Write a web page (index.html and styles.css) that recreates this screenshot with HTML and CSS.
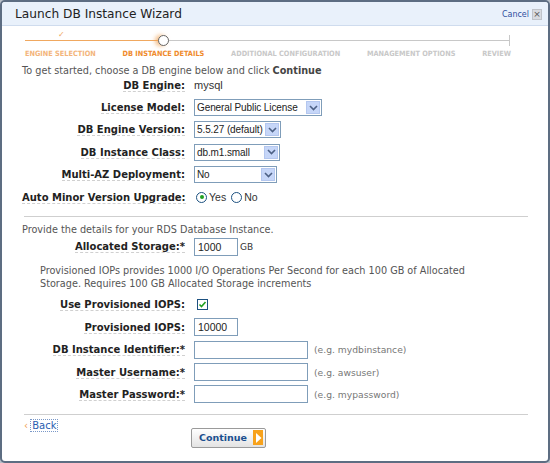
FILE: index.html
```html
<!DOCTYPE html>
<html>
<head>
<meta charset="utf-8">
<link rel="stylesheet" href="styles.css">
</head>
<body>
<div class="dialog">
  <div class="titlebar">
    <span class="title">Launch DB Instance Wizard</span>
    <span class="cancel">Cancel <span class="xbox">×</span></span>
  </div>
  <div class="progress">
    <div class="track">
      <span class="done"></span>
      <span class="todo"></span>
      <span class="tick"></span>
      <span class="check">✓</span>
      <span class="circle"></span>
    </div>
    <div class="steps">
      <span class="step past">ENGINE SELECTION</span>
      <span class="step current">DB INSTANCE DETAILS</span>
      <span class="step">ADDITIONAL CONFIGURATION</span>
      <span class="step">MANAGEMENT OPTIONS</span>
      <span class="step">REVIEW</span>
    </div>
  </div>
  <div class="content">
    <p class="intro">To get started, choose a DB engine below and click <b>Continue</b></p>
    <div class="form">
      <div class="row"><span class="label"><span>DB Engine:</span></span><span class="value">mysql</span></div>
      <div class="row"><span class="label"><span>License Model:</span></span><span class="select w128"><span class="val">General Public License</span><span class="arrow"><svg width="9" height="6" viewBox="0 0 9 6"><path d="M1 1 L4.5 4.5 L8 1" fill="none" stroke="#4d6185" stroke-width="1.6"/></svg></span></span></div>
      <div class="row"><span class="label"><span>DB Engine Version:</span></span><span class="select w87"><span class="val">5.5.27 (default)</span><span class="arrow"><svg width="9" height="6" viewBox="0 0 9 6"><path d="M1 1 L4.5 4.5 L8 1" fill="none" stroke="#4d6185" stroke-width="1.6"/></svg></span></span></div>
      <div class="row"><span class="label"><span>DB Instance Class:</span></span><span class="select w86"><span class="val">db.m1.small</span><span class="arrow"><svg width="9" height="6" viewBox="0 0 9 6"><path d="M1 1 L4.5 4.5 L8 1" fill="none" stroke="#4d6185" stroke-width="1.6"/></svg></span></span></div>
      <div class="row"><span class="label"><span>Multi-AZ Deployment:</span></span><span class="select w83"><span class="val">No</span><span class="arrow"><svg width="9" height="6" viewBox="0 0 9 6"><path d="M1 1 L4.5 4.5 L8 1" fill="none" stroke="#4d6185" stroke-width="1.6"/></svg></span></span></div>
      <div class="row"><span class="label"><span>Auto Minor Version Upgrade:</span></span><span class="value radios"><span class="radio on"></span><span class="rtext">Yes</span><span class="radio"></span><span class="rtext">No</span></span></div>
    </div>
    <hr class="sep">
    <p class="intro2">Provide the details for your RDS Database Instance.</p>
    <div class="form">
      <div class="row"><span class="label"><span>Allocated Storage:*</span></span><span class="value"><input class="input w44" value="1000"><span class="unit">GB</span></span></div>
    </div>
    <p class="note">Provisioned IOPs provides 1000 I/O Operations Per Second for each 100 GB of Allocated Storage. Requires 100 GB Allocated Storage increments</p>
    <div class="form">
      <div class="row"><span class="label"><span>Use Provisioned IOPS:</span></span><span class="value"><span class="checkbox"><svg width="9" height="9" viewBox="0 0 9 9"><path d="M1.5 4.5 L3.5 6.5 L7.5 2" fill="none" stroke="#21a121" stroke-width="1.6"/></svg></span></span></div>
      <div class="row"><span class="label"><span>Provisioned IOPS:</span></span><span class="value"><input class="input w44" value="10000"></span></div>
      <div class="row"><span class="label"><span>DB Instance Identifier:*</span></span><span class="value"><input class="input w114"><span class="hint">(e.g. mydbinstance)</span></span></div>
      <div class="row"><span class="label"><span>Master Username:*</span></span><span class="value"><input class="input w114"><span class="hint">(e.g. awsuser)</span></span></div>
      <div class="row"><span class="label"><span>Master Password:*</span></span><span class="value"><input class="input w114"><span class="hint">(e.g. mypassword)</span></span></div>
    </div>
    <hr class="sep sep2">
    <div class="back"><span class="lt">‹</span> <a class="backlink">Back</a></div>
    <div class="actions">
      <button class="continue">Continue <span class="go"><svg width="7" height="10" viewBox="0 0 7 10"><path d="M1 0 L6.5 5 L1 10 Z" fill="#fff"/></svg></span></button>
    </div>
  </div>
</div>
</body>
</html>
```
FILE: styles.css
```css
* { box-sizing: border-box; }
html, body { margin: 0; padding: 0; }
body {
  width: 550px;
  height: 463px;
  background: #b9c0c9;
  font-family: "DejaVu Sans", Verdana, sans-serif;
  font-size: 9.7px;
  color: #333;
}
.dialog {
  width: 550px;
  height: 463px;
  border: 2px solid #5d6d82;
  border-radius: 5px;
  background: #fff;
  overflow: hidden;
}
.titlebar {
  height: 24px;
  background: #e9f1fb;
  border-bottom: 1px solid #cfdcee;
  display: flex;
  align-items: center;
  justify-content: space-between;
  padding: 1px 6px 0 13px;
}
.title {
  font-size: 12.2px;
  color: #222;
}
.cancel {
  font-size: 8px;
  color: #2f4f9f;
  display: flex;
  align-items: center;
  gap: 3px;
}
.xbox {
  display: inline-flex;
  align-items: center;
  justify-content: center;
  width: 10px;
  height: 11px;
  background: #d8dbe0;
  border: 1px solid #c0c4ca;
  color: #555;
  font-size: 9px;
  line-height: 1;
}
.progress {
  padding: 2px 0 0 23px;
  height: 38px;
}
.track {
  position: relative;
  height: 20px;
  width: 486px;
}
.done {
  position: absolute;
  left: 0; top: 12px;
  width: 135px; height: 1px;
  background: #f0a860;
}
.todo {
  position: absolute;
  left: 135px; top: 12px;
  width: 350px; height: 1px;
  background: #c8c8c8;
}
.tick {
  position: absolute;
  left: 484px; top: 7px;
  width: 1px; height: 11px;
  background: #c8c8c8;
}
.check {
  position: absolute;
  left: 33px; top: 2px;
  font-size: 8px;
  color: #f0a860;
  font-weight: bold;
}
.circle {
  position: absolute;
  left: 133px; top: 7px;
  width: 11px; height: 11px;
  border-radius: 50%;
  background: #fff;
  border: 1.5px solid #666;
  box-shadow: -3px 0 4px rgba(240,160,80,0.7);
}
.steps {
  display: flex;
  justify-content: space-between;
  width: 486px;
  font-family: "DejaVu Sans Condensed", "DejaVu Sans", sans-serif;
  font-size: 7.3px;
  font-weight: bold;
  color: #c8c8c8;
  margin-top: 1px;
}
.step.past { color: #f3b47a; }
.step.current { color: #ef8a2c; }
.content {
  padding: 0 20px 0 20px;
}
.intro, .intro2 {
  margin: 0;
  color: #555;
  line-height: 13px;
}
.intro { margin-bottom: -3px; }
.intro2 { margin-bottom: -1px; }
.intro b { color: #444; }
.form {
  display: flex;
  flex-direction: column;
}
.row {
  display: grid;
  grid-template-columns: 163px 1fr;
  column-gap: 9px;
  align-items: center;
  height: 22.4px;
}
.label {
  text-align: right;
  font-weight: bold;
  font-size: 10px;
  color: #222;
  white-space: nowrap;
}
.label span {
  border-bottom: 1px dashed #d0d0d0;
}
.value {
  display: flex;
  align-items: center;
  color: #333;
  font-family: "Liberation Sans", Arial, sans-serif;
  font-size: 11px;
}
.select {
  display: flex;
  align-items: center;
  height: 17px;
  border: 1px solid #7f9db9;
  background: #fff;
  font-family: "Liberation Sans", Arial, sans-serif;
  font-size: 10px;
  color: #222;
}
.select .val {
  flex: 1;
  padding-left: 2px;
  white-space: nowrap;
  letter-spacing: -0.1px;
}
.select .arrow {
  width: 14px;
  height: 13px;
  margin-right: 1px;
  background: #c6d6f8;
  border: 1px solid #b4c7ef;
  display: flex;
  align-items: center;
  justify-content: center;
  flex: none;
}
.w128 { width: 128px; }
.w87 { width: 87px; }
.w86 { width: 86px; }
.w83 { width: 83px; }
.w44 { width: 44px; }
.w114 { width: 114px; }
.radios { gap: 2px; }
.radio {
  width: 11px; height: 11px;
  border-radius: 50%;
  border: 1px solid #1c5180;
  background: #fff;
  position: relative;
  margin-left: 2px;
}
.radio.on::after {
  content: "";
  position: absolute;
  left: 2.5px; top: 2.5px;
  width: 4px; height: 4px;
  border-radius: 50%;
  background: #21a121;
}
.rtext {
  font-family: "Liberation Sans", Arial, sans-serif;
  font-size: 10.5px;
  margin-right: 1px;
}
.sep {
  border: 0;
  border-top: 1px solid #cfcfcf;
  margin: 8px 0 6px 2px;
}
.input {
  height: 18px;
  border: 1px solid #7f9db9;
  padding: 0 3px;
  font-family: "Liberation Sans", Arial, sans-serif;
  font-size: 10.5px;
  color: #222;
  margin: 0;
}
.unit {
  font-family: "DejaVu Sans", sans-serif;
  font-size: 9px;
  margin-left: 2px;
}
.hint {
  font-family: "DejaVu Sans", sans-serif;
  font-size: 9.2px;
  color: #777;
  margin-left: 6px;
}
.note {
  margin: 6px 0 4px 18px;
  max-width: 440px;
  color: #555;
  line-height: 13px;
}
.checkbox {
  width: 11px; height: 11px;
  border: 1px solid #1c5180;
  display: inline-flex;
  align-items: center;
  justify-content: center;
  margin-left: 3px;
  background: #fff;
}
.back {
  margin-left: 2px;
  font-size: 10px;
  margin-top: -1px;
}
.lt { color: #f0a050; }
.backlink {
  color: #2a5db0;
  outline: 1px dotted #7a98c8;
  padding: 0 1px;
}
.actions {
  padding-left: 169px;
  margin-top: -3px;
}
.continue {
  display: inline-flex;
  align-items: center;
  gap: 6px;
  height: 20px;
  width: 75px;
  padding: 0 2px 0 7px;
  border: 1px solid #9a9a9a;
  border-radius: 2px;
  background: linear-gradient(#ffffff, #e3e3e3);
  font-family: "DejaVu Sans", sans-serif;
  font-weight: bold;
  font-size: 9.5px;
  color: #1a4f8f;
}
.go {
  width: 13px; height: 15px;
  background: #f7a21c;
  display: inline-flex;
  align-items: center;
  justify-content: center;
  margin-left: auto;
}
```
